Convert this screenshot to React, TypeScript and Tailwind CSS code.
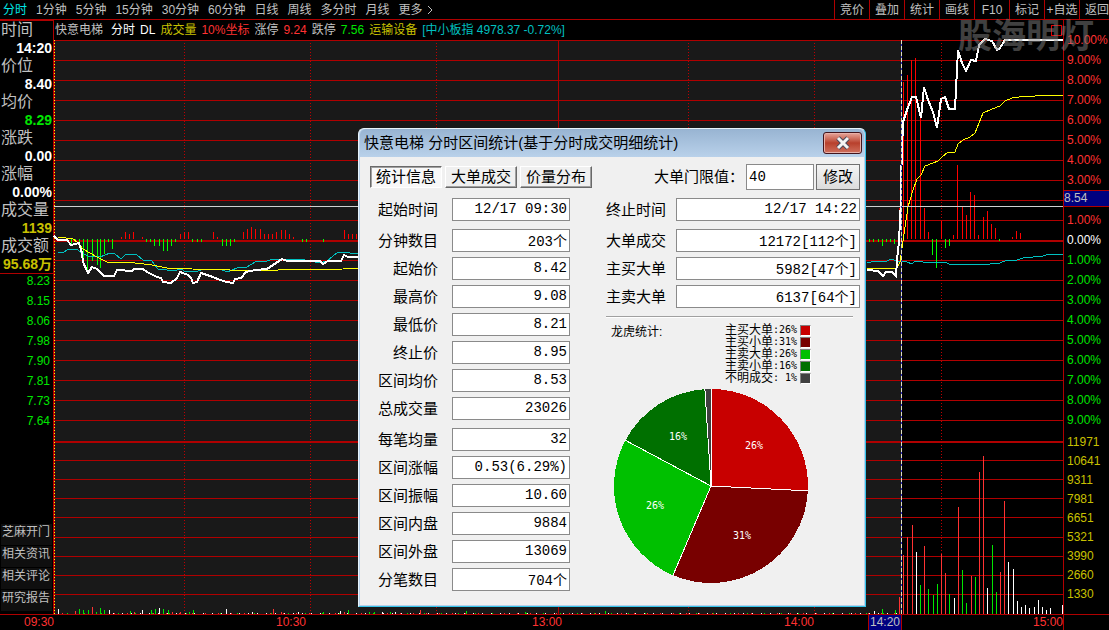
import React from "react";

type Bar = [number, number];

const RED = "#ff3232";
const GREEN = "#00e600";
const WHITE = "#ffffff";

const periods = ["分时", "1分钟", "5分钟", "15分钟", "30分钟", "60分钟", "日线", "周线", "多分时", "月线"];
const tools = ["竞价", "叠加", "统计", "画线", "F10", "标记", "+自选", "返回"];

const stats = [
  { label: "时间", value: "14:20", color: "text-white" },
  { label: "价位", value: "8.40", color: "text-white" },
  { label: "均价", value: "8.29", color: "text-[#00e600]" },
  { label: "涨跌", value: "0.00", color: "text-white" },
  { label: "涨幅", value: "0.00%", color: "text-white" },
  { label: "成交量", value: "1139", color: "text-[#c8c000]" },
  { label: "成交额", value: "95.68万", color: "text-[#c8c000]" },
];

const prices = ["8.23", "8.15", "8.06", "7.98", "7.90", "7.81", "7.73", "7.64"];
const links = ["芝麻开门", "相关资讯", "相关评论", "研究报告"];

const upPercents = ["10.00%", "9.00%", "8.00%", "7.00%", "6.00%", "5.00%", "4.00%", "3.00%"];
const downPercents = ["1.00%", "2.00%", "3.00%", "4.00%", "5.00%", "6.00%", "7.00%", "8.00%", "9.00%"];
const volumes = ["11971", "10641", "9311", "7981", "6651", "5321", "3990", "2660", "1330"];

const leftFields = [
  [["起始时间", "12/17 09:30"]],
  [
    ["分钟数目", "203个"],
    ["起始价", "8.42"],
    ["最高价", "9.08"],
    ["最低价", "8.21"],
    ["终止价", "8.95"],
    ["区间均价", "8.53"],
    ["总成交量", "23026"],
  ],
  [
    ["每笔均量", "32"],
    ["区间涨幅", "0.53(6.29%)"],
    ["区间振幅", "10.60"],
    ["区间内盘", "9884"],
    ["区间外盘", "13069"],
    ["分笔数目", "704个"],
  ],
];

const rightFields = [
  [["终止时间", "12/17 14:22"]],
  [
    ["大单成交", "12172[112个]"],
    ["主买大单", "5982[47个]"],
    ["主卖大单", "6137[64个]"],
  ],
];

const legend = [
  { name: "主买大单", percent: "26%", swatch: "bg-[#c80000]" },
  { name: "主买小单", percent: "31%", swatch: "bg-[#780000]" },
  { name: "主卖大单", percent: "26%", swatch: "bg-[#00c000]" },
  { name: "主卖小单", percent: "16%", swatch: "bg-[#007000]" },
  { name: "不明成交", percent: " 1%", swatch: "bg-[#404040]" },
];

const slices = [
  { share: 25.8, fill: "#c80000" },
  { share: 30.6, fill: "#780000" },
  { share: 26.4, fill: "#00c000" },
  { share: 16.2, fill: "#007000" },
  { share: 1, fill: "#404040" },
];

const gridRows = [
  40, 60, 80, 100, 120, 140, 160, 180, 200, 220, 260, 280, 300, 320, 340, 360, 380, 400, 420,
  460, 479, 498, 517, 537, 556, 575, 594,
];
const dottedColumns = [184, 310, 436, 688, 814, 941];

// buying and selling strength around the zero line: [x, end of the bar]
const buyBars: Bar[] = [
  [121, 237], [125, 232], [129, 234], [133, 232], [142, 237], [180, 234], [184, 232], [188, 232],
  [213, 232], [217, 237], [243, 232], [247, 229], [251, 227], [255, 229], [260, 229], [264, 234],
  [268, 234], [272, 234], [276, 232], [281, 230], [285, 230], [289, 234], [293, 237], [344, 230],
  [348, 234], [352, 234], [356, 234], [899, 208], [903, 82], [907, 75], [911, 60], [915, 58],
  [920, 118], [924, 208], [928, 232], [941, 221], [953, 235], [957, 165], [962, 207], [966, 215],
  [970, 192], [974, 195], [978, 235], [983, 217], [987, 211], [991, 224], [995, 228], [1012, 237],
  [1016, 231], [1020, 233],
];
const sellBars: Bar[] = [
  [71, 245], [75, 242], [79, 247], [83, 262], [87, 273], [92, 261], [97, 265], [100, 268],
  [104, 254], [108, 242], [112, 249], [146, 242], [150, 242], [154, 246], [159, 246], [163, 251],
  [167, 251], [171, 246], [175, 242], [192, 242], [197, 242], [201, 242], [222, 246], [226, 246],
  [230, 246], [234, 242], [302, 242], [306, 242], [323, 242], [869, 242], [873, 242], [878, 242],
  [882, 246], [886, 242], [890, 242], [894, 244], [932, 255], [936, 268], [945, 248], [949, 246],
  [999, 241],
];

// volume bars: [x, top]
const redVolume: Bar[] = [
  [75, 611], [92, 607], [134, 612], [172, 612], [180, 612], [273, 609], [281, 612], [344, 612],
  [420, 610], [899, 597], [903, 555], [907, 537], [912, 525], [924, 546], [941, 554], [945, 573],
  [958, 507], [971, 576], [979, 472], [983, 456], [1000, 572], [1004, 501],
];
const greenVolume: Bar[] = [
  [79, 609], [83, 610], [88, 610], [96, 612], [100, 608], [104, 610], [130, 611], [151, 610],
  [155, 609], [163, 609], [168, 610], [189, 612], [193, 610], [323, 612], [348, 610], [369, 612],
  [374, 612], [390, 612], [466, 611], [525, 612], [605, 611], [882, 609], [895, 610], [920, 585],
  [928, 589], [933, 595], [937, 584], [949, 594], [962, 570], [966, 603], [975, 577], [992, 545],
  [996, 592],
];
const whiteVolume: Bar[] = [
  [58, 609], [109, 610], [142, 610], [159, 608], [226, 609], [252, 612], [298, 612], [340, 611],
  [382, 612], [395, 612], [874, 611], [916, 552], [954, 598], [987, 588], [1008, 562], [1013, 569],
  [1017, 601], [1021, 607], [1025, 605], [1029, 608], [1034, 607], [1038, 600], [1042, 607],
  [1046, 610], [1050, 608], [1062, 605],
];

const barPath = (bars: Bar[], base: number) =>
  bars.map(([x, y]) => `M${x + 0.5} ${base}V${y}`).join("");

const IntradayChart = () => (
  <svg
    viewBox="54 40 1009 574"
    preserveAspectRatio="none"
    shapeRendering="crispEdges"
    fill="none"
    className="absolute inset-0 block h-full w-full overflow-visible"
    aria-label="分时走势"
  >
    <rect x="55" y="40" width="846" height="574" fill="#191919" />

    {/* Grid */}
    <path d={gridRows.map((y) => `M54 ${y + 0.5}H1063`).join("")} stroke="#b00000" />
    <path d="M54 241H1063M54 442H1063" stroke="#b00000" strokeWidth="2" />
    <path
      d={dottedColumns.map((x) => `M${x + 0.5} 43V614`).join("")}
      stroke="#c00000"
      strokeDasharray="1 2"
    />
    <path d="M558.5 40V614" stroke="#b00000" />
    <path d="M54.5 40V614" stroke="#b00000" />
    <path d="M54.5 40V614" stroke="#ffff00" strokeDasharray="1 2" />

    {/* Strength and volume */}
    <path d={barPath(buyBars, 239)} stroke="#ff0000" />
    <path d={barPath(sellBars, 239)} stroke="#00ff00" />
    <path d="M62 613.5H900" stroke={RED} strokeDasharray="1 12" />
    <path d="M67 613.5H900" stroke={GREEN} strokeDasharray="1 16" />
    <path d="M113 613.5H900" stroke={WHITE} strokeDasharray="1 8" />
    <path d={barPath(redVolume, 614)} stroke={RED} />
    <path d={barPath(greenVolume, 614)} stroke={GREEN} />
    <path d={barPath(whiteVolume, 614)} stroke={WHITE} />

    {/* Index, average and price */}
    <path
      d="M58 252L63 253 68 249 77 249 80 252 88 256 100 257 110 253 115 254 121 259 126 254 137 255 143 260 152 261 158 269 167 270 172 271 182 269 185 272 198 271 204 269 220 269 227 272 237 268 247 267 255 262 267 261 273 259 300 259 305 260 320 263 327 261 338 252 350 253 358 254M867 263L875 261 887 261 891 259 897 261 907 262 912 264 915 261 923 262 947 263 949 264 990 264 997 263 1000 263 1007 260 1017 260 1023 258 1043 256 1049 254 1063 254"
      stroke="#00c0c0"
    />
    <path
      d="M58 237L73 239 77 242 83 249 97 257 107 262 135 263 152 265 167 268 192 269 230 270 278 270 343 269 358 268M867 268L897 268 900 262 902 248 905 227 908 207 913 190 917 179 921 175 925 166 933 163 938 161 942 157 948 152 955 152 958 144 963 140 970 137 975 133 979 123 983 113 992 109 1000 106 1005 101 1012 98 1027 96 1035 96 1038 95 1063 95"
      stroke="#ffff00"
    />
    <path
      d="M54 236L58 240 67 240 71 245 79 243 82 253 83 262 88 273 92 267 97 269 104 276 114 276 117 270 132 271 134 269 143 269 147 272 157 277 161 278 163 282 171 283 177 278 180 272 188 275 191 278 193 283 197 282 201 273 213 277 220 280 227 282 233 283 235 279 241 278 246 272 255 270 267 269 273 265 282 259 287 261 320 261 323 264 328 261 341 261 344 255 348 257 358 257M867 270L878 271 883 276 886 272 892 272 896 276 897 260 899 241 901 200 901 180 903 122 907 110 912 97 916 97 921 118 924 87 928 100 933 112 937 128 941 99 945 97 949 109 955 109 958 50 962 63 966 71 971 60 976 61 979 45 985 39 992 41 997 50 1000 48 1005 40 1063 40"
      stroke="#ffffff"
      strokeWidth="2"
    />

    {/* Crosshair */}
    <path d="M54 206.5H1063" stroke="#d0d0d0" />
    <path d="M901.5 40V614" stroke="#3030c0" />
    <path d="M901.5 40V614" stroke="#e0e0c0" strokeDasharray="4 2" />
  </svg>
);

const PieChart = () => {
  const c = 98;
  const point = (share: number) => {
    const a = (share / 100) * Math.PI * 2;
    return `${c + 97 * Math.sin(a)} ${c - 97 * Math.cos(a)}`;
  };
  let start = 0;

  return (
    <svg
      width="196"
      height="196"
      viewBox="0 0 196 196"
      className="ml-[7px] mt-1 block font-['DejaVu_Sans_Mono',monospace] text-[10px]"
      shapeRendering="crispEdges"
      aria-label="龙虎统计"
    >
      {slices.map(({ share, fill }) => {
        const from = start;
        start += share;
        return (
          <path
            key={fill}
            d={`M${c} ${c}L${point(from)}A97 97 0 0 1 ${point(start)}Z`}
            fill={fill}
          />
        );
      })}
      {[0, 25.8, 56.4, 82.8, 99].map((share) => (
        <path key={share} d={`M${c} ${c}L${point(share)}`} stroke="#fff" />
      ))}
      <g fill="#fff" textAnchor="middle">
        <text x="141" y="61">26%</text>
        <text x="129" y="151">31%</text>
        <text x="42" y="121">26%</text>
        <text x="65" y="52">16%</text>
      </g>
    </svg>
  );
};

const FieldGroups = ({ groups, labelClass }: { groups: string[][][]; labelClass: string }) => (
  <div className="flex flex-col gap-2">
    {groups.map((group) => (
      <div key={group[0][0]} className="flex flex-col gap-[5px]">
        {group.map(([label, value]) => (
          <label key={label} className="flex h-[23px] items-center leading-5">
            <span className={labelClass}>{label}</span>
            <input
              readOnly
              defaultValue={value}
              className="h-full min-w-0 flex-1 border border-[#8a8a8a] bg-white px-[2px] pb-px text-right font-['Liberation_Mono','Noto_Sans_CJK_SC',monospace] text-[14px] leading-4 outline-none"
            />
          </label>
        ))}
      </div>
    ))}
  </div>
);

const StatsDialog = () => (
  <div
    role="dialog"
    aria-label="分时区间统计"
    className="absolute left-[358px] top-[128px] w-[508px] rounded-t-md border border-[#35c4ea] border-l-[#e8f4fc] border-t-[#e8f4fc] bg-[#b9d1ea] px-px pb-px text-[15px] text-black"
  >
    <div className="flex h-7 items-center justify-between rounded-t-md bg-linear-to-b from-[#98b4d2] to-[#b9d1ea] pl-1 pr-[2px]">
      <h2 className="leading-5">快意电梯 分时区间统计(基于分时成交明细统计)</h2>
      <button
        aria-label="关闭"
        className="flex h-[22px] w-[39px] items-center justify-center rounded-[3px] border border-[#42141c] bg-linear-to-b from-[#e6a59b] from-0% via-[#b8402c] via-50% to-[#cf6f5c] shadow-[inset_0_0_0_1px_#e8b0a8]"
      >
        <svg width="16" height="14" viewBox="0 0 16 14" fill="none">
          <path d="M3 2L13 12M13 2L3 12" stroke="#4a4a5c" strokeWidth="5" />
          <path d="M3 2L13 12M13 2L3 12" stroke="#f4f4f4" strokeWidth="3" />
        </svg>
      </button>
    </div>

    <div className="bg-[#f0f0f0] pb-[14px] pl-[10px] pr-1 pt-[6px]">
      <div className="flex h-7 items-center justify-between">
        <div role="tablist" className="flex gap-[3px]">
          <button
            role="tab"
            aria-selected="true"
            className="h-[22px] w-[72px] border border-white border-l-[#696969] border-t-[#696969] bg-[#f8f8f8] leading-5 shadow-[inset_1px_1px_0_#a0a0a0]"
          >
            统计信息
          </button>
          {["大单成交", "价量分布"].map((tab) => (
            <button
              key={tab}
              role="tab"
              aria-selected="false"
              className="h-[22px] w-[72px] border border-white border-b-[#696969] border-r-[#696969] leading-5 shadow-[inset_-1px_-1px_0_#a0a0a0]"
            >
              {tab}
            </button>
          ))}
        </div>
        <div className="flex items-center gap-[2px]">
          <label htmlFor="threshold">大单门限值：</label>
          <input
            id="threshold"
            defaultValue="40"
            className="h-[26px] w-[68px] border border-[#8a8a8a] bg-white px-[2px] pb-px font-['Liberation_Mono',monospace] text-[14px] outline-none"
          />
          <button className="h-[26px] w-11 border border-[#707070] bg-linear-to-b from-[#f4f4f4] to-[#dcdcdc] leading-5">
            修改
          </button>
        </div>
      </div>

      <div className="mt-[7px] flex justify-between">
        <div className="w-[200px]">
          <FieldGroups groups={leftFields} labelClass="w-[82px] pr-[14px] text-right" />
        </div>
        <div className="w-[254px]">
          <FieldGroups groups={rightFields} labelClass="w-[70px]" />
          <hr className="mr-[7px] mt-2 h-[2px] border-0 border-b border-t border-b-white border-t-[#a0a0a0]" />
          <div className="mt-[6px] flex justify-between pl-[5px] pr-[49px] text-xs">
            <span className="leading-4">龙虎统计:</span>
            <ul>
              {legend.map(({ name, percent, swatch }) => (
                <li key={name} className="flex h-3 items-center leading-3">
                  <span>{name}</span>
                  <span className="whitespace-pre pr-[3px] font-['DejaVu_Sans_Mono',monospace] text-[10px]">
                    :{percent}
                  </span>
                  <span className={`h-[11px] w-[11px] border border-white border-l-[#808080] border-t-[#808080] ${swatch}`} />
                </li>
              ))}
            </ul>
          </div>
          <PieChart />
        </div>
      </div>
    </div>
  </div>
);

const Sidebar = () => (
  <aside className="flex w-[54px] shrink-0 flex-col border-r border-t border-[#b00000]">
    <dl className="border-b border-[#b00000]">
      {stats.map(({ label, value, color }) => (
        <div key={label}>
          <dt className="h-[18px] whitespace-nowrap pl-px text-base leading-[18px] text-[#c0c0c0]">{label}</dt>
          <dd className={`h-[18px] whitespace-nowrap pr-px text-right text-sm font-bold leading-[18px] ${color}`}>
            {value}
          </dd>
        </div>
      ))}
    </dl>
    <ul className="pr-[3px] text-right leading-[14px] text-[#00e600]">
      {prices.map((price) => (
        <li key={price} className="h-5">{price}</li>
      ))}
    </ul>
    <nav className="mt-auto flex flex-col gap-px pb-[3px] pl-px pr-px">
      {links.map((link) => (
        <a key={link} href="#" className="h-[21px] bg-[#0f0f0f] pl-px leading-4 text-[#c0c0c0]">
          {link}
        </a>
      ))}
    </nav>
  </aside>
);

const RightAxis = () => (
  <aside className="w-[46px] shrink-0 border-l border-[#b00000] pt-[10px] leading-[21px]">
    <ul className="text-[#ff3232]">
      {upPercents.map((p) => (
        <li key={p} className="h-5 pl-[3px]">{p}</li>
      ))}
      <li className="h-5">
        <div className="h-[17px] border-y border-[#b00000] bg-[#000080] leading-[15px] text-[#c0c0c0]">8.54</div>
      </li>
      <li className="h-5 pl-[3px]">1.00%</li>
      <li className="h-5 pl-[3px] text-white">0.00%</li>
    </ul>
    <ul className="pl-[3px] text-[#00e600]">
      {downPercents.map((p) => (
        <li key={p} className="h-5">{p}</li>
      ))}
    </ul>
    <ul className="mt-[3px] pl-[3px] leading-[19px] text-[#c8c000]">
      {volumes.map((v) => (
        <li key={v} className="h-[19px]">{v}</li>
      ))}
    </ul>
  </aside>
);

export default function App() {
  return (
    <div className="relative flex min-h-screen flex-col overflow-hidden bg-black font-['Liberation_Sans','Noto_Sans_CJK_SC',sans-serif] text-xs">
      {/* Period menu */}
      <header className="flex h-5 justify-between whitespace-nowrap border-b border-[#b00000] text-[#c0c0c0]">
        <nav className="flex gap-[9px] pl-[3px] leading-[18px]">
          {periods.map((period, i) => (
            <button key={period} className={i === 0 ? "text-[#00e6e6]" : ""}>{period}</button>
          ))}
          <button className="flex items-center gap-1">
            更多
            <svg width="6" height="10" viewBox="0 0 6 10" fill="none" stroke="currentColor">
              <path d="M1 1L5 5L1 9" />
            </svg>
          </button>
        </nav>
        <nav className="flex leading-[18px]">
          {tools.map((tool) => (
            <button key={tool} className="w-[35px] border-l border-[#b00000] last:w-[30px] last:pl-[5px]">
              {tool}
            </button>
          ))}
        </nav>
      </header>

      <main className="flex flex-1">
        <Sidebar />
        <section className="flex min-w-0 flex-1 flex-col">
          <div className="flex h-5 items-center gap-[5px] whitespace-nowrap pl-px text-[#c0c0c0]">
            <span className="pr-[3px]">快意电梯</span>
            <span className="text-white">分时</span>
            <span className="text-white">DL</span>
            <span className="text-[#c8c000]">成交量</span>
            <span className="text-[#ff3232]">10%坐标</span>
            <span>涨停</span>
            <span className="text-[#ff3232]">9.24</span>
            <span>跌停</span>
            <span className="text-[#00e600]">7.56</span>
            <span className="text-[#c8c000]">运输设备</span>
            <span className="text-[#00c0c0]">[中小板指 4978.37 -0.72%]</span>
            <span className="ml-auto mr-px h-[11px] w-[11px] border border-[#e00000]" />
          </div>
          <div className="relative flex-1">
            <IntradayChart />
          </div>
        </section>
        <RightAxis />
      </main>

      {/* Time axis */}
      <footer className="grid h-4 grid-cols-[54px_252fr_256fr_252fr_88fr_162fr_45px] border-t border-[#b00000] text-right leading-[15px] text-[#ff3232]">
        <span>09:30</span>
        <span>10:30</span>
        <span>13:00</span>
        <span>14:00</span>
        <span className="flex justify-end">
          <span className="w-[34px] border-x border-[#b00000] bg-[#000080] text-center text-[#c0c0c0]">14:20</span>
        </span>
        <span className="border-r border-[#b00000]">15:00</span>
        <span />
      </footer>

      <div className="pointer-events-none absolute right-[15px] top-[16px] text-[34px] font-bold leading-10 text-[#808080]/50">
        股海明灯
      </div>

      <StatsDialog />
    </div>
  );
}
